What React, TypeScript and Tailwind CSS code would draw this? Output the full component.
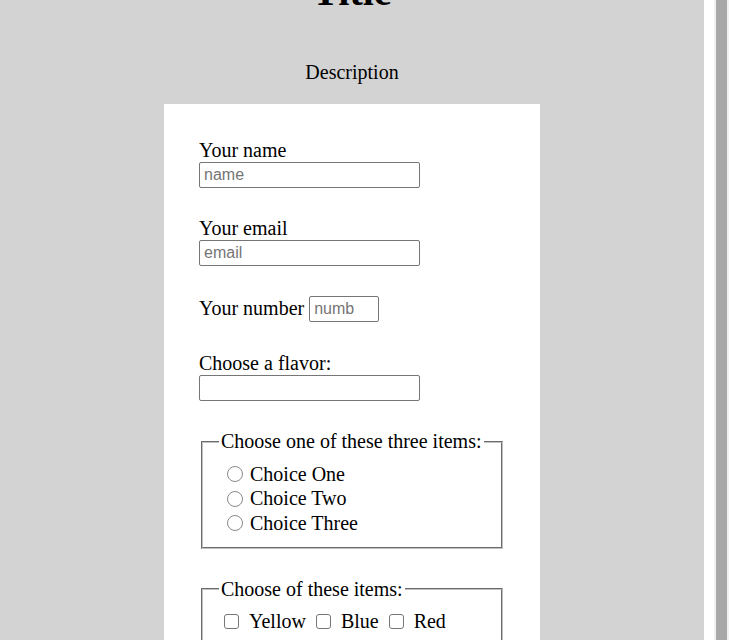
const serif = "font-['Liberation_Serif',serif]";

function TextInput({ placeholder, className = "" }: { placeholder?: string; className?: string }) {
  return (
    <input
      type="text"
      placeholder={placeholder}
      className={`block h-[26px] border border-[#767676] rounded-[2px] bg-white pl-[4px] pr-[2px] text-[16px] leading-[18px] text-black font-['Liberation_Sans',Arial,sans-serif] placeholder:text-[#757575] outline-none ${className}`}
    />
  );
}

function Radio({ label }: { label: string }) {
  return (
    <label className="flex items-center h-[24.5px]">
      <input
        type="radio"
        name="choice"
        className="appearance-none ml-[8px] w-[16px] h-[16px] rounded-full border border-[#8a8a8a] bg-white"
      />
      <span className="ml-[7px]">{label}</span>
    </label>
  );
}

function Check({ label, first }: { label: string; first?: boolean }) {
  return (
    <label className="flex items-center">
      <input
        type="checkbox"
        className={`appearance-none ${first ? "ml-[5px]" : "ml-[10px]"} w-[15px] h-[15px] rounded-[3px] border border-[#767676] bg-white`}
      />
      <span className="ml-[10px]">{label}</span>
    </label>
  );
}

export default function App() {
  return (
    <div className={`flex w-[729px] h-[640px] overflow-hidden text-black ${serif}`}>
      <main className="w-[704px] h-full bg-[#d3d3d3] flex flex-col items-center">
        <h1 className="-mt-[31.5px] text-[40px] leading-[46px] font-bold">Title</h1>
        <p className="mt-[46px] text-[20px] leading-[23px]">Description</p>

        <form className="mt-[20px] w-[376px] bg-white px-[35px] pt-[35px] pb-[40px] text-[20px] leading-[23px]">
          <label className="block">Your name</label>
          <TextInput placeholder="name" className="w-[221px]" />

          <label className="block mt-[29px]">Your email</label>
          <TextInput placeholder="email" className="w-[221px]" />

          <div className="mt-[30px] flex items-center h-[26px]">
            <span>Your number</span>
            <TextInput placeholder="numb" className="ml-[5px] w-[70px]" />
          </div>

          <label className="block mt-[30px]">Choose a flavor:</label>
          <TextInput className="w-[221px]" />

          <fieldset className="mt-[29.5px] mx-[2px] border-2 [border-style:groove] border-[#c0c0c0] pl-[16px] pr-[15px] pt-[9px] pb-[11px]">
            <legend className="px-[2px]">Choose one of these three items:</legend>
            <Radio label="Choice One" />
            <Radio label="Choice Two" />
            <Radio label="Choice Three" />
          </fieldset>

          <fieldset className="mt-[29px] mx-[2px] border-2 [border-style:groove] border-[#c0c0c0] pl-[16px] pr-[15px] pt-[9px] pb-[11px]">
            <legend className="px-[2px]">Choose of these items:</legend>
            <div className="flex items-center h-[24.5px]">
              <Check label="Yellow" first />
              <Check label="Blue" />
              <Check label="Red" />
            </div>
          </fieldset>
        </form>
      </main>
      <div className="w-[10px] h-full bg-white" />
      <div className="w-[15px] h-full bg-[#f1f1f1] px-[2px]">
        <div className="h-full bg-[#a8a8a8]" />
      </div>
    </div>
  );
}
